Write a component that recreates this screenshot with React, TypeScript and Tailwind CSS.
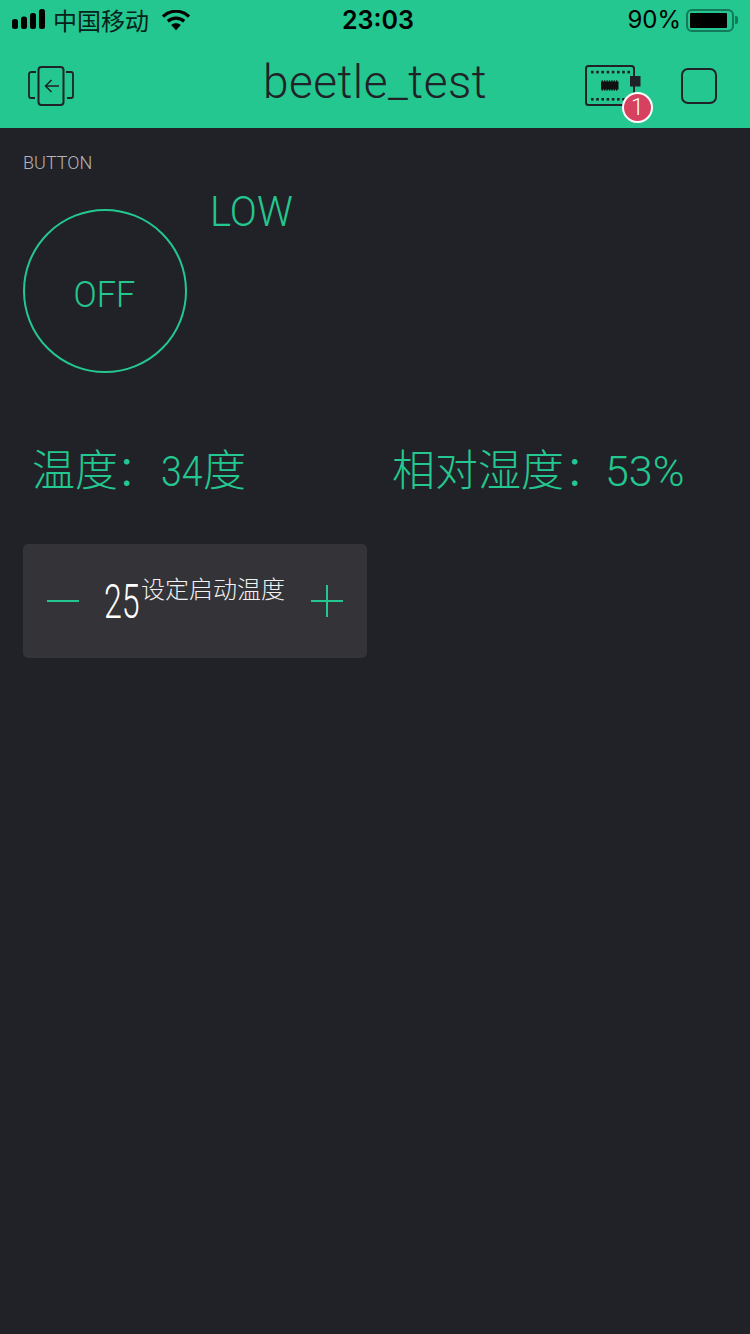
import React from "react";

const SANS = '"Roboto","Noto Sans CJK SC",sans-serif';
const STATUS = '"Inter","Noto Sans CJK SC",sans-serif';

function Signal() {
  return (
    <svg width="34" height="22" viewBox="0 0 34 22" className="block">
      <rect x="0" y="10" width="6" height="10" rx="2.5" fill="#000" />
      <rect x="9" y="7.5" width="6" height="12.5" rx="2.5" fill="#000" />
      <rect x="18" y="4" width="6" height="16" rx="2.5" fill="#000" />
      <rect x="27" y="0" width="6" height="20" rx="2.5" fill="#000" />
    </svg>
  );
}

function Wifi() {
  return (
    <svg width="28" height="21" viewBox="0 0 28 21" className="block">
      <path d="M1 6.5C8.5 -0.5 19.5 -0.5 27 6.5" fill="none" stroke="#000" strokeWidth="3.2" />
      <path d="M5.8 11.2C10.5 7 17.5 7 22.2 11.2" fill="none" stroke="#000" strokeWidth="3.2" />
      <path d="M9.2 15C12 12.6 16 12.6 18.8 15L14 20.2Z" fill="#000" />
    </svg>
  );
}

function Battery() {
  return (
    <div className="flex items-center">
      <div className="w-[48px] h-[23px] rounded-[6px] border-2 border-[#13795a] p-[2px]">
        <div className="w-[37px] h-full bg-black rounded-[1px]" />
      </div>
      <div className="w-[3px] h-[8px] bg-[#13795a] rounded-r-[2px] ml-[1px]" />
    </div>
  );
}

function Board() {
  const top = [0, 1, 2, 3, 4, 5, 6, 7];
  return (
    <svg width="58" height="42" viewBox="0 0 58 42" className="block">
      <rect x="1" y="1" width="48" height="39" rx="2.5" fill="none" stroke="#212227" strokeWidth="2" />
      {top.map((i) => (
        <rect key={`t${i}`} x={6 + i * 5.2} y="5.8" width="2.6" height="2.6" fill="#212227" />
      ))}
      {top.map((i) => (
        <rect key={`b${i}`} x={6 + i * 5.2} y="33" width="2.6" height="2.6" fill="#212227" />
      ))}
      <rect x="16" y="16.5" width="17.5" height="8" rx="0.5" fill="#111" />
      {[0, 1, 2, 3, 4, 5, 6].map((i) => (
        <rect key={`p${i}`} x={16.7 + i * 2.4} y="15.3" width="1.2" height="10.4" fill="#111" />
      ))}
      <rect x="45" y="11" width="10.5" height="10.5" fill="#212227" />
    </svg>
  );
}

export default function App() {
  return (
    <div className="w-[750px] h-[1334px] bg-[#212227] flex flex-col overflow-hidden" style={{ fontFamily: SANS }}>
      <header className="h-[128px] bg-[#23c78f] flex flex-col shrink-0">
        <div className="h-[40px] relative flex items-center justify-between pl-[12px] pr-[12px]" style={{ fontFamily: STATUS }}>
          <div className="flex items-center">
            <Signal />
            <span className="ml-[7px] text-[24px] leading-[30px] text-[#06221a]" style={{ fontFamily: '"Noto Sans CJK SC",sans-serif' }}>中国移动</span>
            <span className="ml-[13px]"><Wifi /></span>
          </div>
          <span className="absolute left-[342px] top-[5px] text-[25px] leading-[30px] font-semibold text-black">23:03</span>
          <div className="flex items-center">
            <span className="text-[24px] leading-[30px] text-black mr-[5px]">90%</span>
            <Battery />
          </div>
        </div>
        <div className="flex-1 flex items-center pl-[28px] pr-[33px] pt-[3px] relative">
          <svg width="47" height="42" viewBox="0 0 47 42" fill="none" stroke="#212227" strokeWidth="2" className="block">
            <rect x="10.5" y="2" width="25" height="38" rx="3" />
            <path d="M8 7H3a2 2 0 0 0-2 2v22a2 2 0 0 0 2 2h4M38 7h5a2 2 0 0 1 2 2v22a2 2 0 0 1-2 2h-4" strokeWidth="1.8" />
            <path d="M31 21H18M23.5 15l-6 6 6 6" strokeWidth="1.5" />
          </svg>
          <div className="absolute left-0 right-0 top-[14px] text-center text-[46px] leading-[56px] font-light text-[#212227] tracking-[0.5px]">beetle_test</div>
          <div className="ml-auto flex items-center relative">
            <div className="relative mr-[38px]">
              <Board />
              <div className="absolute left-[37px] top-[27px] w-[31px] h-[31px] rounded-full bg-[#d5415f] border-2 border-white flex items-center justify-center text-white text-[23px] leading-none font-light">1</div>
            </div>
            <div className="w-[36px] h-[36px] rounded-[7px] border-2 border-[#212227]" />
          </div>
        </div>
      </header>

      <main className="flex-1 px-[23px] pt-[25px]">
        <div className="text-[18px] leading-[20px] text-[#b4b4b7] font-light">BUTTON</div>
        <div className="flex">
          <div className="mt-[36px] w-[164px] h-[164px] rounded-full border-2 border-[#23c78f] flex items-center justify-center pt-[8px] shrink-0">
            <span className="inline-block text-[36px] leading-none text-[#23c78f] font-[350] scale-x-[0.95] -translate-x-[1px]">OFF</span>
          </div>
          <div className="ml-[24px] mt-[13px] h-[50px] text-[43px] leading-[50px] text-[#23c78f] font-[350] scale-x-[0.93] origin-left -translate-x-[1px]">LOW</div>
        </div>
        <div className="mt-[68px] flex text-[#23c78f] text-[43px] leading-[60px] font-light">
          <div className="ml-[9px] w-[360px] whitespace-nowrap">
            温度<span className="inline-block w-[43px] -ml-[2px] mr-[2px]">：</span>
            <span className="inline-block w-[42px] font-[350] scale-x-[0.87] origin-left">34</span>度
          </div>
          <div className="whitespace-nowrap">
            相对湿度<span className="inline-block w-[41px]">：</span>
            <span className="font-[350]">53%</span>
          </div>
        </div>
        <div className="mt-[43px] w-[344px] h-[114px] rounded-[5px] bg-[#333338] flex items-center px-[24px]">
          <div className="w-[32px] h-[2px] bg-[#23c78f] shrink-0" />
          <div className="flex-1 flex pl-[25px] relative">
            <span className="text-[48px] leading-[50px] font-light text-white mt-[2px] scale-x-[0.67] origin-left">25</span>
            <span className="absolute left-[62px] top-[-3px] text-[24px] leading-[32px] font-light text-[#f1f1f1] whitespace-nowrap" style={{ fontFamily: '"Noto Sans CJK SC",sans-serif' }}>设定启动温度</span>
          </div>
          <div className="relative w-[32px] h-[32px] shrink-0">
            <div className="absolute left-0 right-0 top-[15px] h-[2px] bg-[#23c78f]" />
            <div className="absolute top-0 bottom-0 left-[15px] w-[2px] bg-[#23c78f]" />
          </div>
        </div>
      </main>
    </div>
  );
}
